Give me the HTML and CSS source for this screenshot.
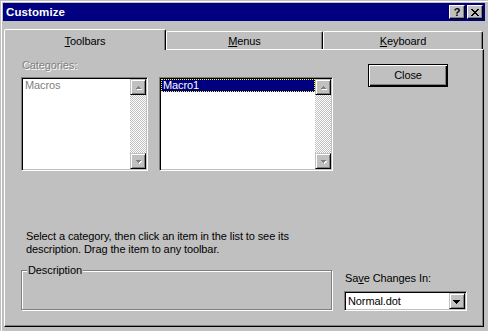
FILE: index.html
```html
<!DOCTYPE html>
<html>
<head>
<meta charset="utf-8">
<link rel="stylesheet" href="styles.css">
</head>
<body>
<div class="window">
  <div class="titlebar">
    <span class="title">Customize</span>
    <div class="tb-buttons">
      <div class="tb-btn help">?</div>
      <div class="tb-btn close">
        <svg width="8" height="7" viewBox="0 0 8 7" shape-rendering="crispEdges"><path d="M0 0h2v1h1v1h2V1h1V0h2v1H7v1H6v1H5v1h1v1h1v1h1v1H6V6H5V5H3v1H2v1H0V6h1V5h1V4h1V3H2V2H1V1H0z" fill="#000"/></svg>
      </div>
    </div>
  </div>
  <div class="tabs">
    <div class="tab active"><span><u>T</u>oolbars</span></div>
    <div class="tab menus"><span><u>M</u>enus</span></div>
    <div class="tab keyboard"><span><u>K</u>eyboard</span></div>
  </div>
  <div class="panel">
    <div class="toprow">
      <div class="col cat">
        <div class="label disabled">Categories:</div>
        <div class="listbox">
          <div class="items"><div class="item gray">Macros</div></div>
          <div class="sb">
            <div class="sb-btn"><svg width="14" height="14" viewBox="0 0 14 14" shape-rendering="crispEdges"><path d="M7 6h1v1h1v1h1v1H5V8h1V7h1z" fill="#fff" transform="translate(1 1)"/><path d="M7 6h1v1h1v1h1v1H5V8h1V7h1z" fill="#808080"/></svg></div>
            <div class="sb-track"></div>
            <div class="sb-btn"><svg width="14" height="14" viewBox="0 0 14 14" shape-rendering="crispEdges"><path d="M5 6h5v1H9v1H8v1H7V8H6V7H5z" fill="#fff" transform="translate(1 1)"/><path d="M5 6h5v1H9v1H8v1H7V8H6V7H5z" fill="#808080"/></svg></div>
          </div>
        </div>
      </div>
      <div class="col cmd">
        <div class="label">&nbsp;</div>
        <div class="listbox">
          <div class="items"><div class="item selected">Macro1</div></div>
          <div class="sb">
            <div class="sb-btn"><svg width="14" height="14" viewBox="0 0 14 14" shape-rendering="crispEdges"><path d="M7 6h1v1h1v1h1v1H5V8h1V7h1z" fill="#fff" transform="translate(1 1)"/><path d="M7 6h1v1h1v1h1v1H5V8h1V7h1z" fill="#808080"/></svg></div>
            <div class="sb-track"></div>
            <div class="sb-btn"><svg width="14" height="14" viewBox="0 0 14 14" shape-rendering="crispEdges"><path d="M5 6h5v1H9v1H8v1H7V8H6V7H5z" fill="#fff" transform="translate(1 1)"/><path d="M5 6h5v1H9v1H8v1H7V8H6V7H5z" fill="#808080"/></svg></div>
          </div>
        </div>
      </div>
      <div class="col side">
        <div class="btn default">Close</div>
      </div>
    </div>
    <p class="hint">Select a category, then click an item in the list to see its<br>description. Drag the item to any toolbar.</p>
    <div class="bottomrow">
      <div class="group"><span class="group-label">Description</span></div>
      <div class="save">
        <div class="save-label">Sa<u>v</u>e Changes In:</div>
        <div class="combo">
          <span class="combo-text">Normal.dot</span>
          <div class="drop"><svg width="14" height="14" viewBox="0 0 14 14" shape-rendering="crispEdges"><path d="M3 6h7v1H9v1H8v1H7v1H6V9H5V8H4V7H3z" fill="#000"/></svg></div>
        </div>
      </div>
    </div>
  </div>
</div>
</body>
</html>
```
FILE: styles.css
```css
* { box-sizing: border-box; }
html, body { margin: 0; padding: 0; }
body {
  background: #c0c0c0;
  font-family: "Liberation Sans", Arial, sans-serif;
  font-size: 11px;
  letter-spacing: -0.1px;
  color: #000;
  width: 488px;
  height: 331px;
  overflow: hidden;
}
.window {
  width: 488px;
  height: 331px;
  padding: 3px 3px 0 3px;
  box-shadow: inset 1px 1px #c0c0c0, inset 2px 2px #fff;
}
.titlebar {
  height: 18px;
  background: #000080;
  display: flex;
  align-items: center;
  justify-content: space-between;
  padding: 0 2px 0 3px;
}
.title { color: #fff; font-weight: bold; font-size: 11.5px; letter-spacing: 0.1px; }
.tb-buttons { display: flex; gap: 2px; }
.tb-btn {
  width: 16px;
  height: 14px;
  background: #c0c0c0;
  border: 1px solid;
  border-color: #fff #000 #000 #fff;
  box-shadow: inset -1px -1px #808080;
  display: flex;
  align-items: center;
  justify-content: center;
  font-weight: bold;
  font-size: 11px;
  line-height: 12px;
}
.tabs {
  display: flex;
  align-items: flex-end;
  height: 20px;
  margin: 8px 0 0 1px;
  position: relative;
  z-index: 1;
}
.tab {
  height: 18px;
  background: #c0c0c0;
  border-left: 1px solid #fff;
  border-top: 1px solid #fff;
  border-right: 1px solid #000;
  box-shadow: inset -1px 0 #808080;
  border-radius: 2px 2px 0 0;
  text-align: center;
  padding-top: 3px;
  line-height: 13px;
}
.tab.active { width: 162px; height: 21px; margin-bottom: -1px; padding-top: 5px; }
.tab.menus { width: 157px; }
.tab.keyboard { width: 160px; }
.panel {
  margin-left: 1px;
  width: 480px;
  height: 278px;
  border: 1px solid;
  border-color: #fff #000 #000 #fff;
  box-shadow: inset -1px -1px #808080;
  padding: 9px 0 0 16px;
}
.toprow { display: flex; align-items: flex-start; }
.cat { width: 127px; }
.cmd { width: 174px; margin-left: 11px; }
.side { margin-left: 35px; padding-top: 5px; }
.label { line-height: 13px; height: 13px; padding-left: 1px; }
.disabled { color: #808080; text-shadow: 1px 1px 0 #fff; }
.listbox {
  margin-top: 5px;
  height: 94px;
  background: #fff;
  border: 1px solid;
  border-color: #808080 #fff #fff #808080;
  box-shadow: inset 1px 1px #000, inset -1px -1px #c0c0c0;
  padding: 1px;
  display: flex;
}
.items { flex: 1; }
.item { line-height: 13px; height: 13px; padding-left: 2px; }
.item.gray { color: #808080; }
.item.selected {
  background: #000080;
  color: #fff;
  outline: 1px dotted #ffff00;
  outline-offset: -1px;
}
.sb { width: 16px; display: flex; flex-direction: column; }
.sb-btn {
  height: 16px;
  background: #c0c0c0;
  border: 1px solid;
  border-color: #c0c0c0 #000 #000 #c0c0c0;
  box-shadow: inset 1px 1px #fff, inset -1px -1px #808080;
}
.sb-btn svg, .drop svg { display: block; }
.sb-track {
  flex: 1;
  background: repeating-conic-gradient(#c0c0c0 0 25%, #fff 0 50%) 0 0 / 2px 2px;
}
.btn {
  width: 80px;
  height: 23px;
  background: #c0c0c0;
  display: flex;
  align-items: center;
  justify-content: center;
  line-height: 13px;
}
.btn.default {
  border: 1px solid #000;
  box-shadow: inset 1px 1px #fff, inset -1px -1px #000, inset -2px -2px #808080;
}
.hint { margin: 59px 0 0 5px; line-height: 13px; }
.bottomrow { display: flex; align-items: flex-start; margin-top: 8px; }
.group {
  width: 311px;
  height: 40px;
  margin-top: 6px;
  border: 1px solid #808080;
  box-shadow: inset 1px 1px #fff, 1px 1px #fff;
}
.group-label {
  display: inline-block;
  margin: -7px 0 0 5px;
  padding: 0 1px;
  background: #c0c0c0;
  line-height: 13px;
  vertical-align: top;
}
.save { margin-left: 12px; margin-top: 8px; }
.save-label { line-height: 13px; padding-left: 1px; }
.combo {
  margin-top: 6px;
  width: 123px;
  height: 20px;
  background: #fff;
  border: 1px solid;
  border-color: #808080 #fff #fff #808080;
  box-shadow: inset 1px 1px #000, inset -1px -1px #c0c0c0;
  padding: 1px;
  display: flex;
  align-items: stretch;
}
.combo-text { flex: 1; line-height: 16px; padding-left: 2px; }
.drop {
  width: 16px;
  background: #c0c0c0;
  border: 1px solid;
  border-color: #c0c0c0 #000 #000 #c0c0c0;
  box-shadow: inset 1px 1px #fff, inset -1px -1px #808080;
}
```
